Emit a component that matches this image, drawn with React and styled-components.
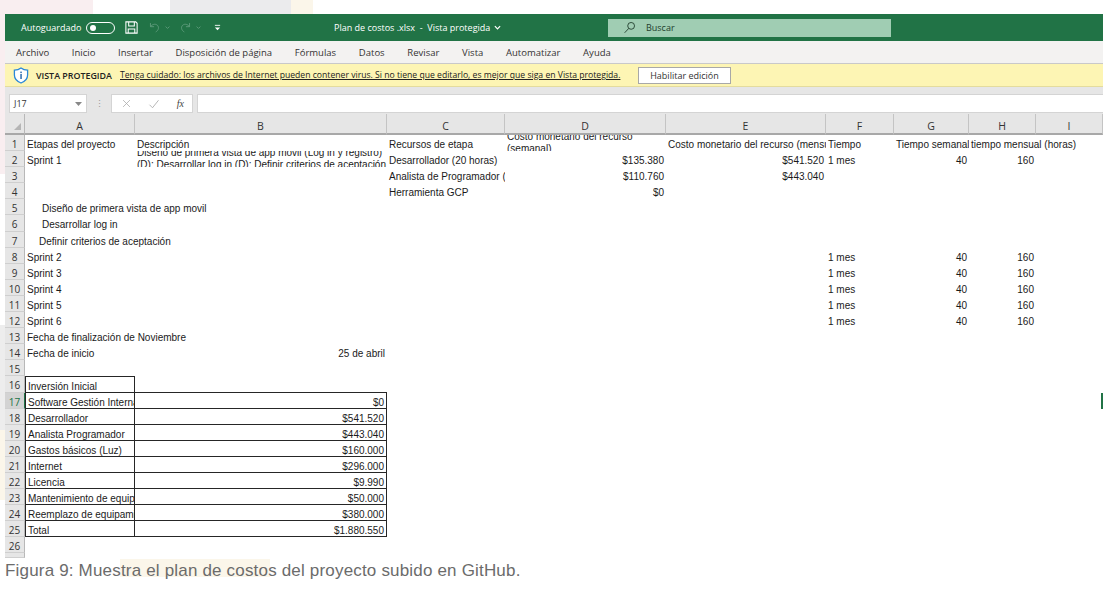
import React from "react";
import styled, { createGlobalStyle } from "styled-components";

const GlobalStyle = createGlobalStyle`
  html, body { margin: 0; padding: 0; background: #fff; }
  * { box-sizing: border-box; }
`;

const UI_FONT = `"Open Sans", "Noto Sans", sans-serif`;
const CELL_FONT = `"Liberation Sans", Arial, sans-serif`;
const GRID_COLS = "20px 110px 252px 118px 161px 160px 68px 75px 67px 67px";
const LETTERS = ["A", "B", "C", "D", "E", "F", "G", "H", "I"];

// faint leftovers of the document page behind the screenshot
const Page = styled.div`
  width: 1112px;
  height: 592px;
  overflow: hidden;
  padding: 14px 9px 0 5px;
  background:
    linear-gradient(#fbf6ea, #fbf6ea) 120px 559px / 150px 18px no-repeat,
    linear-gradient(#f9eef0, #f9eef0) 0 0 / 93px 14px no-repeat,
    linear-gradient(#ebebed, #ebebed) 170px 0 / 121px 14px no-repeat,
    linear-gradient(#fbf6ea, #fbf6ea) 291px 0 / 22px 14px no-repeat,
    linear-gradient(#f9eef0, #f9eef0) 0 14px / 5px 160px no-repeat,
    linear-gradient(#ededed, #ededed) 0 325px / 5px 105px no-repeat,
    linear-gradient(#fbf6ea, #fbf6ea) 0 430px / 5px 70px no-repeat,
    #fff;
`;

const TitleBar = styled.div`
  height: 27px;
  background: #217346;
  color: #fff;
  display: flex;
  align-items: center;
  font: 9px ${UI_FONT};
  padding-left: 16px;
`;

const AutoSave = styled.span`
  width: 65px;
`;

const Toggle = styled.span`
  width: 29px;
  height: 12px;
  border: 1px solid #fff;
  border-radius: 7px;
  display: flex;
  align-items: center;
  padding-left: 3px;
  margin-right: 9px;
  &::before {
    content: "";
    width: 6px;
    height: 6px;
    border-radius: 50%;
    background: #fff;
  }
`;

const QuickIcons = styled.div`
  width: 210px;
  display: flex;
  align-items: center;
  gap: 9px;
`;

const FileTitle = styled.div`
  width: 274px;
  display: flex;
  align-items: center;
  gap: 4px;
  white-space: pre;
`;

const SearchBox = styled.div`
  width: 283px;
  height: 18px;
  background: #a0cdb3;
  color: #1f3d2c;
  display: flex;
  align-items: center;
  gap: 10px;
  padding-left: 15px;
`;

const MenuBar = styled.nav`
  height: 23px;
  background: #f3f2f1;
  border-bottom: 1px solid #c9c9c9;
  display: flex;
  align-items: center;
  gap: 22.7px;
  padding-left: 11px;
  font: 9.5px ${UI_FONT};
  color: #333;
`;

const Notice = styled.div`
  height: 23px;
  background: #fdf5b4;
  border-bottom: 1px solid #e4dc9e;
  display: flex;
  align-items: center;
  padding-left: 8px;
  font: 8.64px ${UI_FONT};
  color: #222;
`;

const NoticeTitle = styled.strong`
  font-weight: 600;
  font-size: 8.9px;
  width: 84px;
  margin-left: 7px;
  white-space: nowrap;
`;

const NoticeLink = styled.span`
  text-decoration: underline;
  width: 518px;
  white-space: nowrap;
`;

const EnableButton = styled.button`
  width: 93px;
  height: 17px;
  padding: 0;
  background: #fff;
  border: 1px solid #a8a8a8;
  font: 9px ${UI_FONT};
  color: #333;
`;

const FormulaBar = styled.div`
  height: 27px;
  background: #e6e6e6;
  display: flex;
  align-items: flex-end;
  padding: 0 0 1px 4px;
`;

const NameBox = styled.div`
  width: 78px;
  height: 19px;
  background: #fff;
  border: 1px solid #d4d4d4;
  display: flex;
  align-items: center;
  justify-content: space-between;
  padding: 0 4px 0 4px;
  font: 9px ${UI_FONT};
  color: #333;
`;

const Grip = styled.span`
  width: 24px;
  text-align: center;
  color: #9a9a9a;
  font: 9px/19px ${UI_FONT};
`;

const FormulaTools = styled.div`
  width: 82px;
  height: 19px;
  background: #fff;
  border: 1px solid #d4d4d4;
  display: flex;
  align-items: center;
  justify-content: space-between;
  padding: 0 8px 0 9px;
  margin-right: 4px;
`;

const FxLabel = styled.i`
  font: italic 10px "Liberation Serif", serif;
  color: #444;
`;

const FormulaInput = styled.div`
  flex: 1;
  height: 19px;
  background: #fff;
  border: 1px solid #d4d4d4;
  border-right: 0;
`;

const Row = styled.div`
  display: grid;
  grid-template-columns: ${GRID_COLS};
  grid-template-rows: minmax(0, 1fr);
  height: ${(p) => p.$height || 16.1}px;
`;

const Corner = styled.div`
  background: #e6e6e6;
  border-right: 1px solid #b8b8b8;
  border-bottom: 2px solid #a8a8a8;
  display: flex;
  align-items: flex-end;
  justify-content: flex-end;
  padding: 0 3px 3px 0;
`;

const ColHead = styled.div`
  background: #e6e6e6;
  border-right: 1px solid #c4c4c4;
  border-bottom: 2px solid #a8a8a8;
  font: 10.5px/25px ${UI_FONT};
  color: #333;
  text-align: center;
  overflow: hidden;
`;

const RowHead = styled.div`
  background: ${(p) => (p.$active ? "#d3d3d3" : "#e6e6e6")};
  color: ${(p) => (p.$active ? "#217346" : "#333")};
  border-right: 1px solid ${(p) => (p.$active ? "#217346" : "#b8b8b8")};
  border-bottom: 1px solid #cfcfcf;
  font: 10px/19px ${UI_FONT};
  text-align: center;
  overflow: hidden;
`;

const Cell = styled.div`
  font: 10px/16px ${CELL_FONT};
  color: #1a1a1a;
  min-width: 0;
  padding: 2px 2px 0 ${(p) => p.$indent || 2}px;
  white-space: nowrap;
  text-align: ${(p) => (p.$right ? "right" : "left")};
  overflow: ${(p) => (p.$clip || p.$wrap ? "hidden" : "visible")};
  ${(p) => p.$wrap && "white-space: pre; display: flex; align-items: center; line-height: 12.2px; padding-top: 0;"}
  ${(p) => p.$box && p.$box.map((side) => `border-${side}: 1px solid #262626;`).join("")}
  ${(p) => p.$marker && "border-right: 2px solid #217346;"}
`;

const Caption = styled.p`
  margin: 3px 0 0;
  font: 17px/20px ${CELL_FONT};
  letter-spacing: 0.18px;
  color: #6b6b6b;
  white-space: nowrap;
`;

const Icon = ({ size = 12, children }) => (
  <svg width={size} height={size} viewBox="0 0 16 16" fill="none" stroke="currentColor" strokeWidth="1.1">
    {children}
  </svg>
);

const Dimmed = styled.span`
  color: #5f9c7d;
  display: flex;
  align-items: center;
  gap: 4px;
`;

const Light = styled.span`
  color: #a8a8a8;
  display: flex;
`;

const QatMenu = styled.svg`
  margin-left: 4px;
`;

const Shield = () => (
  <svg width="16" height="17" viewBox="0 0 16 17" fill="none">
    <path d="M8 1 C6 2.6 3.8 3.2 1.4 3.2 V8 C1.4 12 4.4 14.6 8 16 C11.6 14.6 14.6 12 14.6 8 V3.2 C12.2 3.2 10 2.6 8 1 Z" fill="#fff" stroke="#2b88d8" strokeWidth="1.3" />
    <rect x="7.3" y="7" width="1.5" height="5" fill="#2b6cb0" />
    <rect x="7.3" y="4.6" width="1.5" height="1.5" fill="#2b6cb0" />
  </svg>
);

const Chevron = ({ size = 5 }) => (
  <svg width={size} height={size} viewBox="0 0 8 8" fill="none" stroke="currentColor" strokeWidth="1.4">
    <path d="M1 2.5 L4 5.5 L7 2.5" />
  </svg>
);

const MENU = ["Archivo", "Inicio", "Insertar", "Disposición de página", "Fórmulas", "Datos", "Revisar", "Vista", "Automatizar", "Ayuda"];

const sprint = (name) => ({ A: { text: name }, F: { text: "1 mes" }, G: { text: "40", right: true }, H: { text: "160", right: true } });

const invest = (label, amount) => ({
  A: { text: label, clip: true, box: ["left", "right", "bottom"] },
  B: { text: amount, right: true, box: ["right", "bottom"] },
});

const ROWS = [
  {
    A: { text: "Etapas del proyecto" },
    B: { text: "Descripción" },
    C: { text: "Recursos de etapa" },
    D: { text: "Costo monetario del recurso\n(semanal)", wrap: true },
    E: { text: "Costo monetario del recurso (mensual)", clip: true },
    F: { text: "Tiempo" },
    G: { text: "Tiempo semanal", clip: true },
    H: { text: "tiempo mensual (horas)" },
  },
  {
    A: { text: "Sprint 1" },
    B: { text: "Diseño de primera vista de app movil (Log in y registro)\n(D): Desarrollar log in (D): Definir criterios de aceptación", wrap: true },
    C: { text: "Desarrollador (20 horas)" },
    D: { text: "$135.380", right: true },
    E: { text: "$541.520", right: true },
    F: { text: "1 mes" },
    G: { text: "40", right: true },
    H: { text: "160", right: true },
  },
  { C: { text: "Analista de Programador (20 horas)", clip: true }, D: { text: "$110.760", right: true }, E: { text: "$443.040", right: true } },
  { C: { text: "Herramienta GCP" }, D: { text: "$0", right: true } },
  { A: { text: "Diseño de primera vista de app movil", indent: 17 } },
  { A: { text: "Desarrollar log in", indent: 17 } },
  { A: { text: "Definir criterios de aceptación", indent: 14 } },
  sprint("Sprint 2"),
  sprint("Sprint 3"),
  sprint("Sprint 4"),
  sprint("Sprint 5"),
  sprint("Sprint 6"),
  { A: { text: "Fecha de finalización de Noviembre" } },
  { A: { text: "Fecha de inicio" }, B: { text: "25 de abril", right: true } },
  {},
  { A: { text: "Inversión Inicial", box: ["top", "left", "right", "bottom"] }, B: { box: ["bottom"] } },
  { ...invest("Software Gestión Interna", "$0"), I: { marker: true } },
  invest("Desarrollador", "$541.520"),
  invest("Analista Programador", "$443.040"),
  invest("Gastos básicos (Luz)", "$160.000"),
  invest("Internet", "$296.000"),
  invest("Licencia", "$9.990"),
  invest("Mantenimiento de equipamiento", "$50.000"),
  invest("Reemplazo de equipamiento", "$380.000"),
  invest("Total", "$1.880.550"),
  {},
];

export default function App() {
  return (
    <Page>
      <GlobalStyle />
      <TitleBar>
        <AutoSave>Autoguardado</AutoSave>
        <Toggle />
        <QuickIcons>
          <Icon size={15}>
            <path d="M2 2 H12.5 L14 3.5 V14 H2 Z M5 2 V6.5 H11 V2 M4.5 14 V9.5 H11.5 V14" />
          </Icon>
          <Dimmed>
            <Icon size={13}>
              <path d="M3 2.5 V7 H7.5 M3.2 7 C5 4 9 3 11.5 5.2 C14 7.6 13 11.5 9.5 13.5" />
            </Icon>
            <Chevron />
          </Dimmed>
          <Dimmed>
            <Icon size={13}>
              <path d="M13 2.5 V7 H8.5 M12.8 7 C11 4 7 3 4.5 5.2 C2 7.6 3 11.5 6.5 13.5" />
            </Icon>
            <Chevron />
          </Dimmed>
          <QatMenu width="7" height="7" viewBox="0 0 8 8" fill="#fff">
            <rect x="1" y="1" width="6" height="1" />
            <path d="M1 4 H7 L4 7 Z" />
          </QatMenu>
        </QuickIcons>
        <FileTitle>
          Plan de costos .xlsx  -  Vista protegida
          <Chevron size={7} />
        </FileTitle>
        <SearchBox>
          <Icon size={13}>
            <circle cx="10" cy="6" r="4.2" />
            <path d="M7 9.2 L2 14.5" />
          </Icon>
          Buscar
        </SearchBox>
      </TitleBar>
      <MenuBar>
        {MENU.map((item) => (
          <span key={item}>{item}</span>
        ))}
      </MenuBar>
      <Notice>
        <Shield />
        <NoticeTitle>VISTA PROTEGIDA</NoticeTitle>
        <NoticeLink>
          Tenga cuidado: los archivos de Internet pueden contener virus. Si no tiene que editarlo, es mejor que siga en Vista protegida.
        </NoticeLink>
        <EnableButton>Habilitar edición</EnableButton>
      </Notice>
      <FormulaBar>
        <NameBox>
          J17
          <svg width="7" height="4" viewBox="0 0 7 4" fill="#888">
            <path d="M0 0 H7 L3.5 4 Z" />
          </svg>
        </NameBox>
        <Grip>⋮</Grip>
        <FormulaTools>
          <Light>
            <Icon size={11}>
              <path d="M3 3 L13 13 M13 3 L3 13" />
            </Icon>
          </Light>
          <Light>
            <Icon size={12}>
              <path d="M2 9 L6 13 L14 3" />
            </Icon>
          </Light>
          <FxLabel>fx</FxLabel>
        </FormulaTools>
        <FormulaInput />
      </FormulaBar>
      <Row $height={21}>
        <Corner>
          <svg width="7" height="7" viewBox="0 0 7 7" fill="#b5b5b5">
            <path d="M7 0 V7 H0 Z" />
          </svg>
        </Corner>
        {LETTERS.map((letter) => (
          <ColHead key={letter}>{letter}</ColHead>
        ))}
      </Row>
      {ROWS.map((row, i) => (
        <Row key={i}>
          <RowHead $active={i === 16}>{i + 1}</RowHead>
          {LETTERS.map((letter) => {
            const cell = row[letter] || {};
            return (
              <Cell
                key={letter}
                $right={cell.right}
                $clip={cell.clip}
                $wrap={cell.wrap}
                $indent={cell.indent}
                $box={cell.box}
                $marker={cell.marker}
              >
                {cell.text}
              </Cell>
            );
          })}
        </Row>
      ))}
      <Row $height={5}>
        <RowHead />
      </Row>
      <Caption>Figura 9: Muestra el plan de costos del proyecto subido en GitHub.</Caption>
    </Page>
  );
}
